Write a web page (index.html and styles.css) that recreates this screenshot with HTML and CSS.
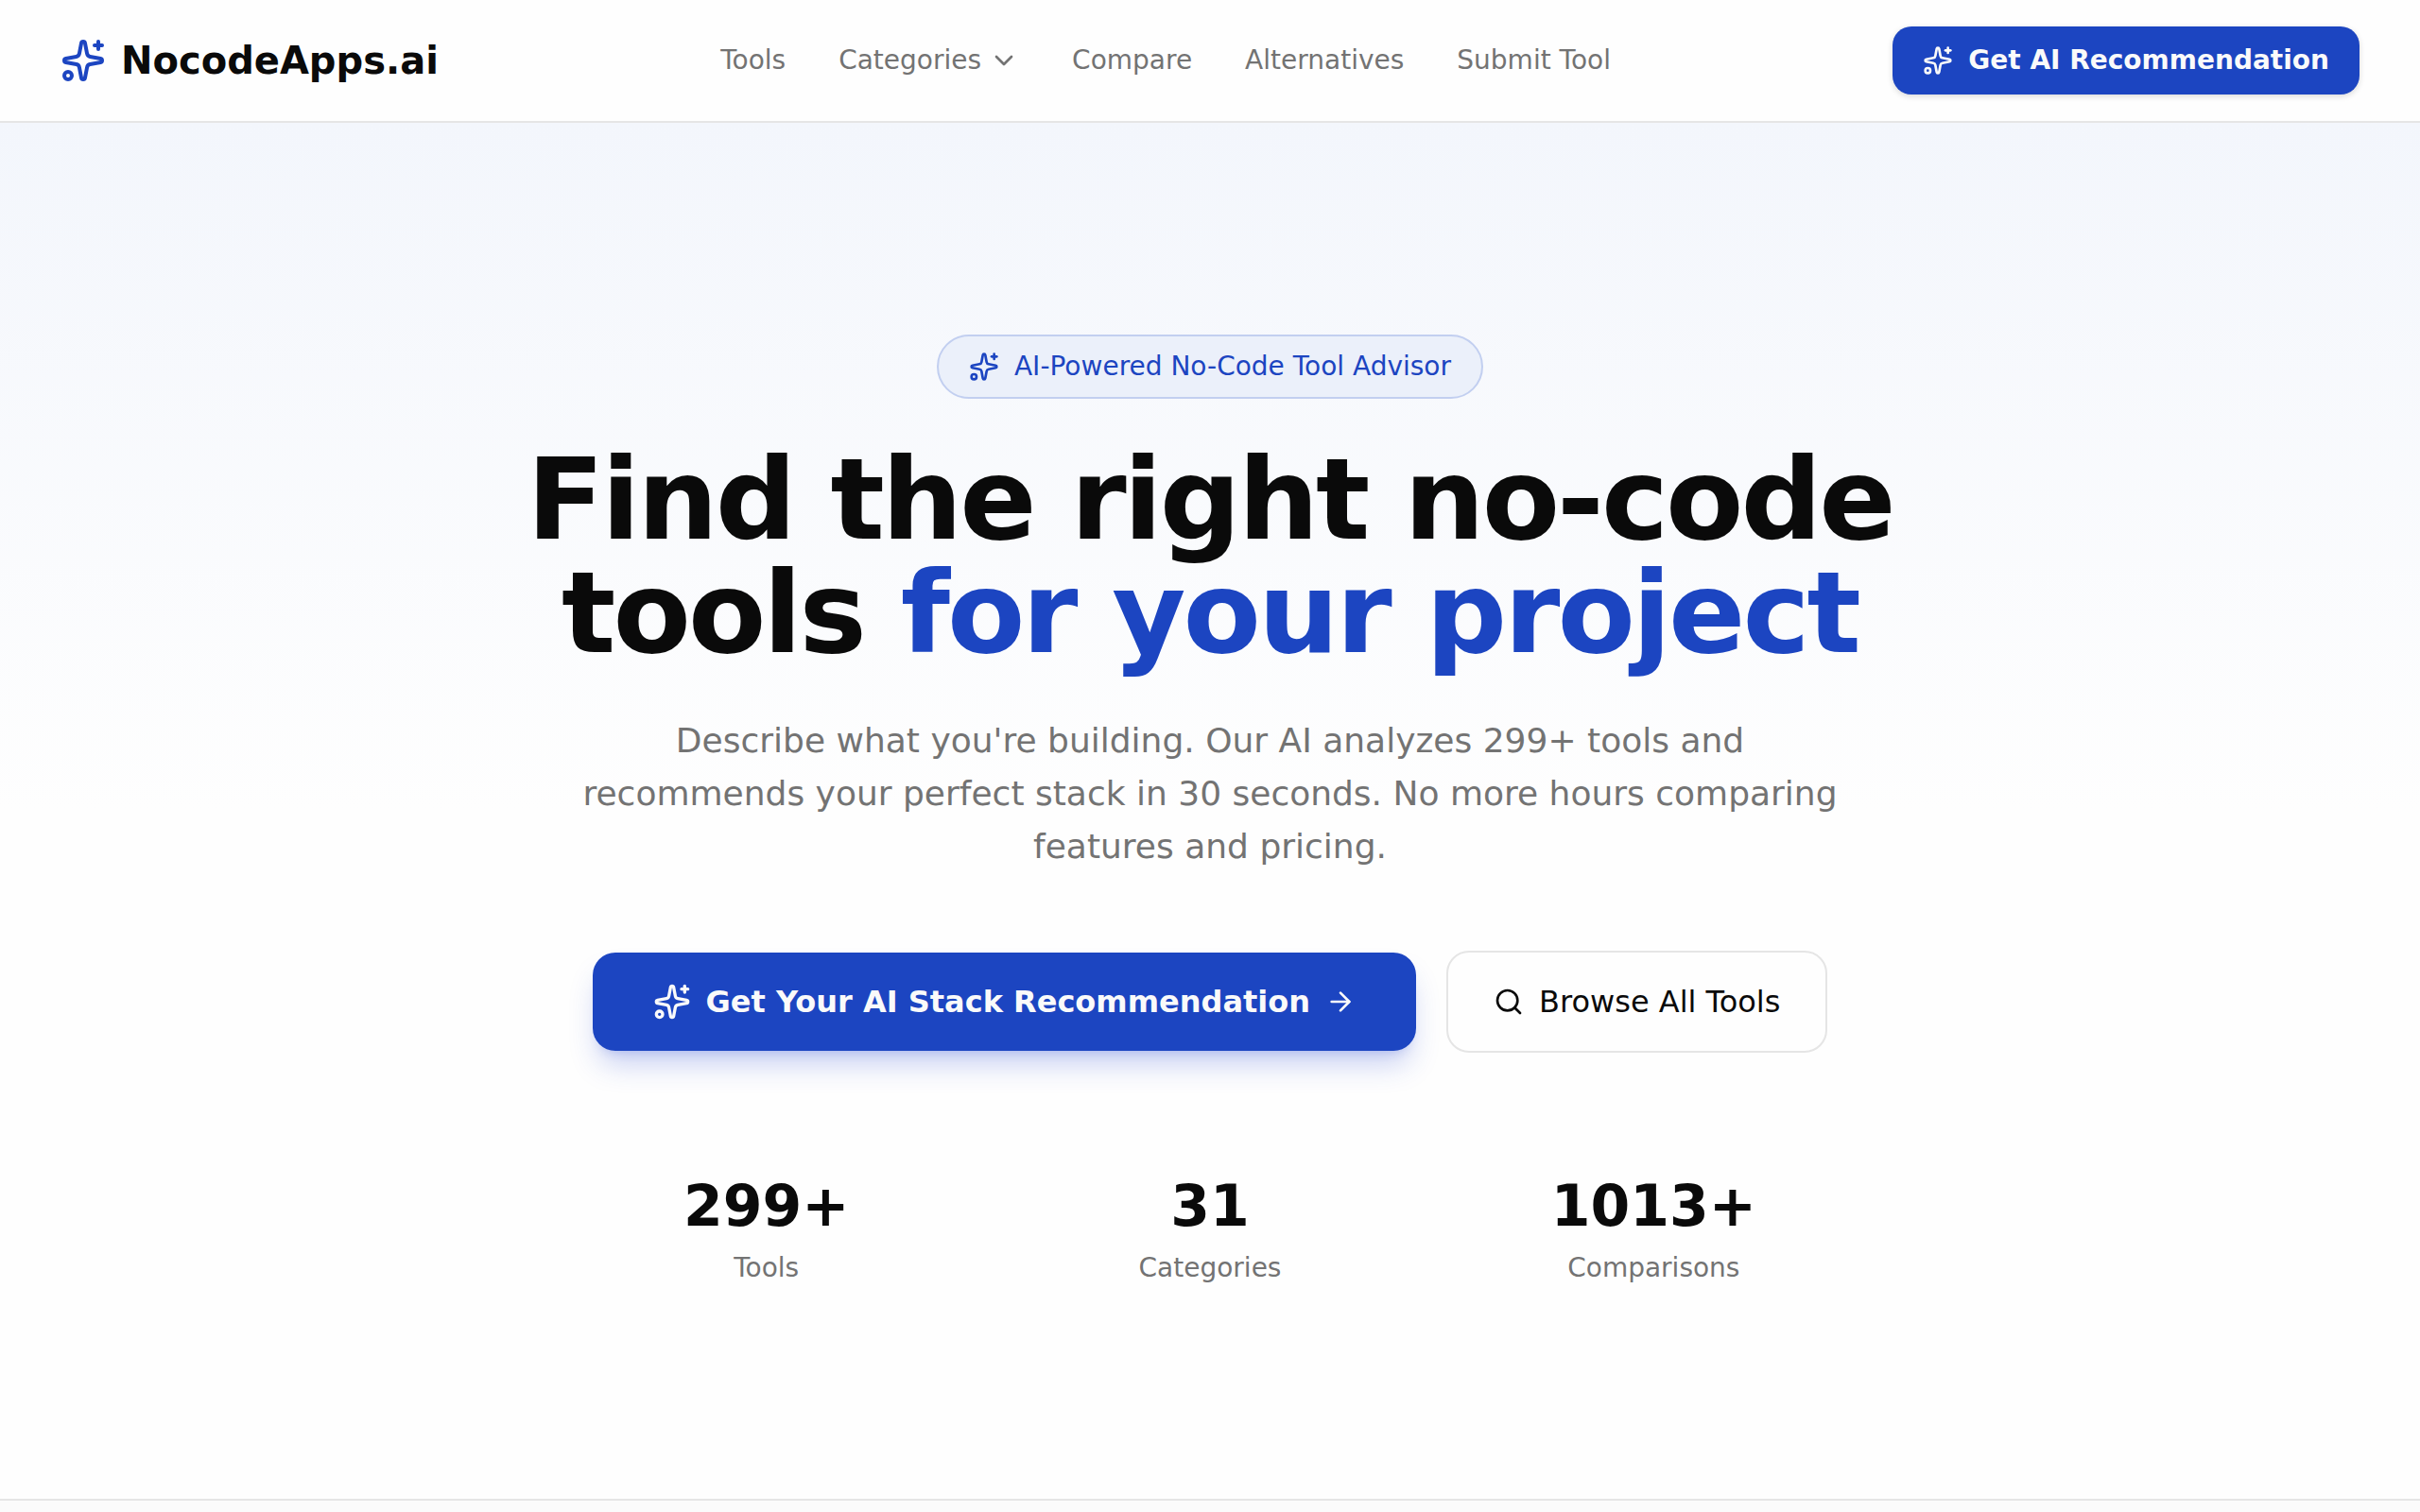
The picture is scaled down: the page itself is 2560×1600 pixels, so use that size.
FILE: index.html
```html
<!DOCTYPE html>
<html lang="en">
<head>
    <meta charset="UTF-8">
    <meta name="viewport" content="width=device-width, initial-scale=1.0">
    <title>NocodeApps.ai</title>
    <link rel="stylesheet" href="styles.css">
</head>
<body>
    <!-- Shared icon shapes -->
    <svg class="icon-defs" aria-hidden="true">
        <symbol id="sparkles" viewBox="0 0 24 24">
            <path d="M11.017 2.814a1 1 0 0 1 1.966 0l1.051 5.558a2 2 0 0 0 1.594 1.594l5.558 1.051a1 1 0 0 1 0 1.966l-5.558 1.051a2 2 0 0 0-1.594 1.594l-1.051 5.558a1 1 0 0 1-1.966 0l-1.051-5.558a2 2 0 0 0-1.594-1.594l-5.558-1.051a1 1 0 0 1 0-1.966l5.558-1.051a2 2 0 0 0 1.594-1.594z"/>
            <path d="M20 2v4"/>
            <path d="M22 4h-4"/>
            <circle cx="4" cy="20" r="2"/>
        </symbol>
    </svg>

    <header class="site-header">
        <a class="logo" href="#">
            <svg class="icon icon-lg"><use href="#sparkles"/></svg>
            <span>NocodeApps.ai</span>
        </a>
        <nav class="main-nav">
            <a href="#">Tools</a>
            <button type="button">
                Categories
                <svg class="icon" viewBox="0 0 24 24"><path d="m6 9 6 6 6-6"/></svg>
            </button>
            <a href="#">Compare</a>
            <a href="#">Alternatives</a>
            <a href="#">Submit Tool</a>
        </nav>
        <a class="header-cta" href="#">
            <svg class="icon"><use href="#sparkles"/></svg>
            Get AI Recommendation
        </a>
    </header>

    <main>
        <section class="hero">
            <div class="badge">
                <svg class="icon"><use href="#sparkles"/></svg>
                AI-Powered No-Code Tool Advisor
            </div>
            <h1>Find the right no-code tools <span class="highlight">for your project</span></h1>
            <p class="lead">Describe what you're building. Our AI analyzes 299+ tools and recommends your perfect stack in 30 seconds. No more hours comparing features and pricing.</p>
            <div class="hero-actions">
                <a class="btn btn-primary" href="#">
                    <svg class="icon icon-md"><use href="#sparkles"/></svg>
                    Get Your AI Stack Recommendation
                    <svg class="icon" viewBox="0 0 24 24"><path d="M5 12h14"/><path d="m12 5 7 7-7 7"/></svg>
                </a>
                <a class="btn btn-outline" href="#">
                    <svg class="icon" viewBox="0 0 24 24"><path d="m21 21-4.34-4.34"/><circle cx="11" cy="11" r="8"/></svg>
                    Browse All Tools
                </a>
            </div>
            <div class="stats">
                <div class="stat">
                    <div class="stat-value">299+</div>
                    <div class="stat-label">Tools</div>
                </div>
                <div class="stat">
                    <div class="stat-value">31</div>
                    <div class="stat-label">Categories</div>
                </div>
                <div class="stat">
                    <div class="stat-value">1013+</div>
                    <div class="stat-label">Comparisons</div>
                </div>
            </div>
        </section>
        <section class="next-section"></section>
    </main>
</body>
</html>
```
FILE: styles.css
```css
/* Global Styles */
* {
    box-sizing: border-box;
}

body {
    margin: 0;
    min-height: 100vh;
    display: flex;
    flex-direction: column;
    background: #fefefe;
    color: #0a0a0a;
    font-family: "DejaVu Sans", sans-serif;
    font-size: 28px;
    line-height: 40px;
}

a {
    color: inherit;
    text-decoration: none;
}

main {
    flex: 1;
    display: flex;
    flex-direction: column;
}

/* Icons */
.icon-defs {
    display: none;
}

.icon {
    width: 32px;
    height: 32px;
    flex-shrink: 0;
    fill: none;
    stroke: currentColor;
    stroke-width: 2;
    stroke-linecap: round;
    stroke-linejoin: round;
}

.icon-md {
    width: 40px;
    height: 40px;
}

.icon-lg {
    width: 48px;
    height: 48px;
}

/* Header */
.site-header {
    display: flex;
    justify-content: space-between;
    align-items: center;
    padding: 28px 64px;
    border-bottom: 2px solid #e5e5e5;
}

.logo {
    display: flex;
    align-items: center;
    gap: 16px;
    font-size: 40px;
    font-weight: bold;
}

.logo .icon {
    color: #1c45c1;
}

.main-nav {
    display: flex;
    align-items: center;
    gap: 56px;
    color: #737373;
}

.main-nav button {
    display: flex;
    align-items: center;
    gap: 8px;
    padding: 0;
    border: none;
    background: none;
    color: inherit;
    font: inherit;
    cursor: pointer;
}

.header-cta {
    display: flex;
    align-items: center;
    gap: 16px;
    padding: 16px 32px;
    border-radius: 20px;
    background: #1c45c1;
    color: #fafafa;
    font-weight: bold;
    box-shadow: 0 2px 6px rgba(0, 0, 0, 0.15);
}

/* Hero */
.hero {
    display: flex;
    flex-direction: column;
    align-items: center;
    padding: 224px 64px;
    border-bottom: 2px solid #e5e5e5;
    background: linear-gradient(to bottom, #f3f6fc, #fefefe 50%);
    text-align: center;
}

.badge {
    display: flex;
    align-items: center;
    gap: 16px;
    padding: 12px 32px;
    border: 2px solid #c2cff0;
    border-radius: 34px;
    background: #ebf0fa;
    color: #1c45c1;
}

h1 {
    max-width: 1536px;
    margin: 47px 0;
    font-size: 120px;
    line-height: 120px;
    letter-spacing: -0.025em;
}

.highlight {
    color: #1c45c1;
}

.lead {
    max-width: 1344px;
    margin: 0 0 82px;
    color: #737373;
    font-size: 36px;
    line-height: 56px;
}

.hero-actions {
    display: flex;
    align-items: center;
    gap: 32px;
    margin-bottom: 128px;
    font-size: 32px;
    line-height: 48px;
}

.btn {
    display: flex;
    align-items: center;
    gap: 16px;
    border-radius: 24px;
}

.btn-primary {
    padding: 28px 64px;
    background: #1c45c1;
    color: #fafafa;
    font-weight: bold;
    box-shadow: 0 20px 30px -6px rgba(40, 70, 210, 0.25), 0 8px 12px -8px rgba(40, 70, 210, 0.25);
}

.btn-outline {
    padding: 28px 48px;
    border: 2px solid #e5e5e5;
    background: #fefefe;
}

/* Stats */
.stats {
    display: grid;
    grid-template-columns: repeat(3, 1fr);
    gap: 64px;
    width: 100%;
    max-width: 1344px;
}

.stat-value {
    margin-bottom: 12px;
    font-size: 60px;
    font-weight: bold;
    line-height: 68px;
}

.stat-label {
    color: #737373;
}

.next-section {
    flex: 1;
    background: #fbfbfb;
}
```
